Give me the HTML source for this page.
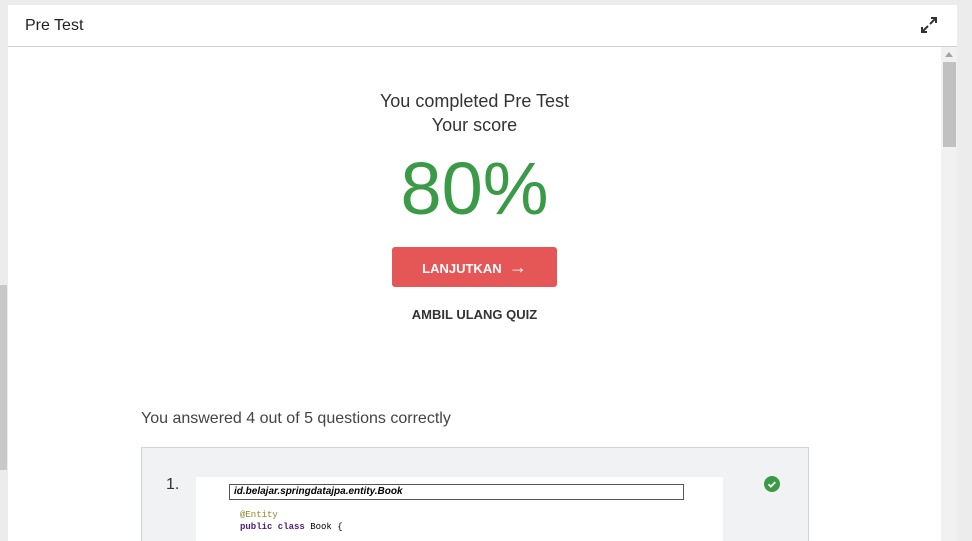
<!DOCTYPE html>
<html style="overflow:hidden;height:541px"><head><style>
body{margin:0;width:972px;height:541px;background:#ececec;font-family:"Liberation Sans",sans-serif;overflow:hidden;position:relative}
.panel{position:absolute;left:8px;top:5px;width:949px;height:536px;background:#fff;overflow:hidden}
.hdr{height:41px;border-bottom:1px solid #cfcfd6;position:relative}
.hdr span{position:absolute;left:17px;top:12px;font-size:16px;color:#222}
.sb{position:absolute;left:933px;top:42px;width:16px;height:494px;background:#f1f1f1}
.thumb{position:absolute;left:2px;top:15px;width:13px;height:85px;background:#c1c1c1}
.c{position:absolute;left:0;width:933px;text-align:center;color:#333}
</style></head><body>
<div style="position:absolute;left:0;top:285px;width:7px;height:185px;background:#c8c8c8"></div>
<div class="panel">
<div class="hdr"><span>Pre Test</span>
<svg style="position:absolute;left:912px;top:11px" width="18" height="18" viewBox="0 0 18 18" fill="none" stroke="#333" stroke-width="2"><path d="M10 8L16 2M11 2h5v5M8 10L2 16M2 11v5h5"/></svg></div>
<div class="sb"><div style="position:absolute;left:4px;top:5px;border:4px solid transparent;border-bottom:5px solid #a3a3a3;border-top:0"></div><div class="thumb"></div></div>
<div class="c" style="top:84px;font-size:18px;line-height:24px">You completed Pre Test<br>Your score</div>
<div class="c" style="top:142px;font-size:74px;color:#3a9a48;line-height:84px">80%</div>
<div style="position:absolute;left:384px;top:242px;width:165px;height:40px;background:#e55757;border-radius:3px;color:#fff;font-weight:bold;font-size:13px;line-height:40px;text-align:center">LANJUTKAN &nbsp;<span style="font-size:18px">→</span></div>
<div class="c" style="top:302px;font-size:13px;font-weight:bold;color:#333">AMBIL ULANG QUIZ</div>
<div style="position:absolute;left:133px;top:405px;font-size:16px;color:#444">You answered 4 out of 5 questions correctly</div>
<div style="position:absolute;left:133px;top:442px;width:666px;height:100px;background:#f1f2f4;border:1px solid #d0d2d6">
<div style="position:absolute;left:24px;top:28px;font-size:16px;color:#333">1.</div>
<div style="position:absolute;left:54px;top:29px;width:527px;height:70px;background:#fff">
<div style="position:absolute;left:33px;top:7px;font-size:10px;font-style:italic;font-weight:bold;line-height:14px;padding-left:4px;box-sizing:border-box;width:455px;height:16px;border:1px solid #555">id.belajar.springdatajpa.entity.Book</div>
<div style="position:absolute;left:44px;top:32px;font-family:'Liberation Mono',monospace;font-size:9px;line-height:12px"><span style="color:#8a8a2a">@Entity</span><br><b style="color:#4b1e78">public class</b> Book {</div>
</div>
<svg style="position:absolute;left:622px;top:28px" width="16" height="16"><circle cx="8" cy="8" r="8" fill="#3a9a48"/><path d="M4.5 8.3l2.3 2.3 4.5-4.5" stroke="#fff" stroke-width="1.8" fill="none"/></svg>
</div>
</div>
</body></html>
